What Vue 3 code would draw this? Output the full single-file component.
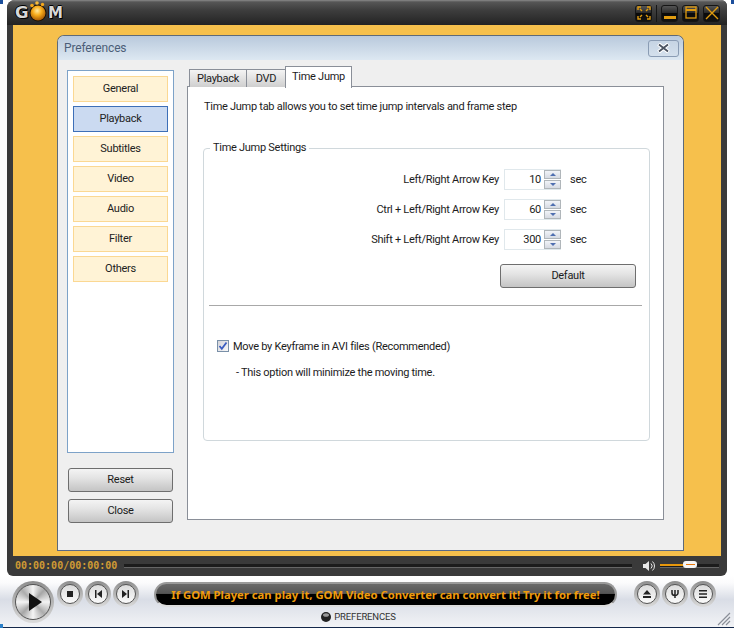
<script setup>
const navItems = ['General', 'Playback', 'Subtitles', 'Video', 'Audio', 'Filter', 'Others']
const rows = [
  { label: 'Left/Right Arrow Key', value: 10 },
  { label: 'Ctrl + Left/Right Arrow Key', value: 60 },
  { label: 'Shift + Left/Right Arrow Key', value: 300 }
]
</script>

<template>
  <div class="player">
    <div class="frame">
      <header class="titlebar">
        <div class="logo">
          <span class="lg">G</span>
          <svg width="20" height="21" viewBox="0 0 20 21">
            <defs>
              <radialGradient id="orb" cx="45%" cy="35%" r="65%">
                <stop offset="0" stop-color="#ffe9a0" />
                <stop offset="0.45" stop-color="#f8ad1c" />
                <stop offset="1" stop-color="#a85a04" />
              </radialGradient>
            </defs>
            <circle cx="10" cy="12" r="8.500" fill="#1a1005" />
            <circle cx="10" cy="12" r="7.500" fill="url(#orb)" />
            <circle cx="4" cy="4.500" r="1.800" fill="#f5a81c" />
            <circle cx="9" cy="2" r="1.800" fill="#f8bb3a" />
            <circle cx="14.500" cy="3.500" r="1.700" fill="#f5a81c" />
          </svg>
          <span class="lm">M</span>
        </div>
        <div class="winbtns">
          <button class="winbtn">
            <svg width="14" height="14" viewBox="0 0 14 14" fill="none" stroke="#dd9a10" stroke-width="1.400">
              <path d="M1 4V1h3M10 1h3v3M1 10v3h3M10 13h3v-3M3 3l2 2M11 3L9 5M3 11l2-2M11 11L9 9" />
            </svg>
          </button>
          <span class="winsep"></span>
          <button class="winbtn">
            <svg width="14" height="14" viewBox="0 0 14 14"><rect x="1" y="10" width="12" height="3" fill="#e09c10" /></svg>
          </button>
          <button class="winbtn">
            <svg width="14" height="14" viewBox="0 0 14 14" fill="none" stroke="#e09c10" stroke-width="1.300">
              <rect x="2" y="1" width="10" height="11" /><path d="M2 4h10" stroke-width="2" />
            </svg>
          </button>
          <button class="winbtn">
            <svg width="14" height="14" viewBox="0 0 14 14" fill="none" stroke="#e09c10" stroke-width="1.400"><path d="M1 1l12 12M13 1L1 13" /></svg>
          </button>
        </div>
      </header>

      <main class="stage">
        <section class="dialog">
          <div class="dlg-title">
            <span>Preferences</span>
            <button class="dlg-close">
              <svg width="13" height="10" viewBox="0 0 13 10">
                <path d="M1.500 1l10 8M11.500 1l-10 8" fill="none" stroke="#fff" stroke-width="4" />
                <path d="M2 1.500l9 7M11 1.500l-9 7" fill="none" stroke="#4a5260" stroke-width="1.800" />
              </svg>
            </button>
          </div>
          <div class="dlg-body">
            <aside class="side">
              <nav class="side-list">
                <div v-for="n in navItems" :key="n" class="nav-item" :class="{ active: n === 'Playback' }">{{ n }}</div>
              </nav>
              <button class="btn side-btn first">Reset</button>
              <button class="btn side-btn">Close</button>
            </aside>
            <div class="tabs-wrap">
              <div class="tabs">
                <div class="tab">Playback</div>
                <div class="tab dvd">DVD</div>
                <div class="tab on">Time Jump</div>
              </div>
              <div class="panel">
                <p class="desc">Time Jump tab allows you to set time jump intervals and frame step</p>
                <div class="group">
                  <span class="legend">Time Jump Settings</span>
                  <div class="fields">
                    <div v-for="r in rows" :key="r.label" class="field">
                      <span class="f-label">{{ r.label }}</span>
                      <div class="spin">
                        <span class="spin-val">{{ r.value }}</span>
                        <span class="spin-arrows">
                          <i class="up"></i>
                          <i class="down"></i>
                        </span>
                      </div>
                      <span class="unit">sec</span>
                    </div>
                  </div>
                  <button class="btn default">Default</button>
                  <div class="divider"></div>
                  <label class="check">
                    <span class="box">
                      <svg width="10" height="10" viewBox="0 0 10 10"><path d="M1.500 5l2.300 2.800L8.500 1.500" fill="none" stroke="#3a5cc0" stroke-width="1.800" /></svg>
                    </span>
                    Move by Keyframe in AVI files (Recommended)
                  </label>
                  <p class="hint">- This option will minimize the moving time.</p>
                </div>
              </div>
            </div>
          </div>
        </section>
      </main>

      <div class="timebar">
        <span class="clock">00:00:00/00:00:00</span>
        <div class="seek"></div>
        <svg class="vol-ic" width="12" height="12" viewBox="0 0 12 12">
          <path d="M0 4h2.500L6 1v10L2.500 8H0z" fill="#e8e8e8" />
          <path d="M8 3.500a3.500 3.500 0 0 1 0 5M9.500 1.500a6 6 0 0 1 0 9" fill="none" stroke="#e8e8e8" stroke-width="1" />
        </svg>
        <div class="vol">
          <div class="vol-fill"></div>
          <div class="vol-thumb"><i></i></div>
        </div>
      </div>
    </div>

    <footer class="controls">
      <div class="round big">
        <div class="disc">
          <svg width="14" height="18" viewBox="0 0 14 18"><path d="M1 0l13 9L1 18z" fill="#111" /></svg>
        </div>
      </div>
      <div class="round">
        <div class="disc"><svg width="8" height="8" viewBox="0 0 8 8"><rect x="1" y="1" width="6" height="6" fill="#222" /></svg></div>
      </div>
      <div class="round">
        <div class="disc"><svg width="8" height="8" viewBox="0 0 8 8"><path d="M1 0h1.500v8H1zM8 0v8L3 4z" fill="#222" /></svg></div>
      </div>
      <div class="round">
        <div class="disc"><svg width="8" height="8" viewBox="0 0 8 8"><path d="M0 0v8l5-4zM5.500 0H7v8H5.500z" fill="#222" /></svg></div>
      </div>
      <div class="center">
        <div class="marquee"><span>If GOM Player can play it, GOM Video Converter can convert it! Try it for free!</span></div>
        <div class="caption">
          <svg width="10" height="10" viewBox="0 0 10 10"><circle cx="5" cy="5" r="5" fill="#222" /><ellipse cx="5" cy="3" rx="3" ry="1.800" fill="#999" /></svg>
          <span>PREFERENCES</span>
        </div>
      </div>
      <div class="round">
        <div class="disc"><svg width="10" height="8" viewBox="0 0 10 8"><path d="M5 0l4 4.500H1zM1 6h8v2H1z" fill="#222" /></svg></div>
      </div>
      <div class="round">
        <div class="disc"><svg width="8" height="8" viewBox="0 0 8 8"><path d="M1 0v3a3 2.500 0 0 0 6 0V0M4 0v8" fill="none" stroke="#222" stroke-width="1.500" /></svg></div>
      </div>
      <div class="round">
        <div class="disc"><svg width="8" height="8" viewBox="0 0 8 8"><path d="M0 0h8v1.600H0zM0 3.200h8v1.600H0zM0 6.400h8V8H0z" fill="#222" /></svg></div>
      </div>
      <svg class="grip" width="14" height="14" viewBox="0 0 14 14">
        <path d="M13 1L1 13M13 5L5 13M13 9l-4 4" stroke="#8a8f98" stroke-width="1.200" fill="none" />
      </svg>
    </footer>
  </div>
</template>

<style scoped>
.player {
  position: relative;
  width: 734px;
  height: 628px;
  overflow: hidden;
  background: #fff;
  font-family: Roboto, "Liberation Sans", Arial, sans-serif;
  font-size: 11px;
  letter-spacing: -0.28px;
  color: #1c1c1c;
}
.player::before,
.player::after {
  content: "";
  position: absolute;
  top: 0;
  width: 3px;
  height: 4px;
  background: #1c4f9c;
}
.player::before { left: 0; }
.player::after { right: 0; }
.frame {
  width: 720px;
  height: 576px;
  margin-left: 7px;
  background: #3a3a3a;
  border-radius: 8px 6px 6px 6px;
}
.titlebar {
  height: 25px;
  display: flex;
  align-items: center;
  justify-content: space-between;
  padding: 1px 7px 0 8px;
  box-sizing: border-box;
  background: linear-gradient(#8a8a8a 0, #565656 2px, #3e3e3e 10px, #232323 25px);
  border-radius: 8px 6px 0 0;
}
.logo {
  display: flex;
  align-items: center;
  font: 900 15px/16px "DejaVu Sans", sans-serif;
  letter-spacing: 0;
  color: #d8d8d8;
  text-shadow: 1px 1px 0 #000, -1px 0 0 #000, 0 -1px 0 #000;
}
.lg, .lm { display: block; transform-origin: left center; }
.lg { width: 13px; transform: scaleX(1.100); }
.lm { width: 15px; }
.logo svg { margin-top: -3px; }
.winbtns { display: flex; align-items: center; gap: 4px; }
.winbtn {
  width: 17px;
  height: 17px;
  padding: 0;
  display: flex;
  align-items: center;
  justify-content: center;
  background: linear-gradient(#555 0, #2a2a2a 45%, #0a0a0a 50%, #121212 100%);
  border: 1px solid #151515;
  border-radius: 3px;
}
.winsep { width: 1px; height: 17px; background: #161616; }
.stage {
  width: 708px;
  height: 531px;
  margin-left: 6px;
  padding: 10px 37px 5px 44px;
  box-sizing: border-box;
  background: #f6c04c;
}
.dialog {
  width: 627px;
  height: 516px;
  box-sizing: border-box;
  background: #efefef;
  border: 1px solid #5e6a78;
  border-bottom-color: #5a6a88;
  border-radius: 7px 7px 0 0;
}
.dlg-title {
  height: 24px;
  display: flex;
  align-items: center;
  justify-content: space-between;
  padding: 0 4px 0 6px;
  background: linear-gradient(#b9c9dc, #dde8f2);
  color: #4c5e78;
  font-size: 12px;
  letter-spacing: -0.15px;
  border-radius: 6px 6px 0 0;
}
.dlg-close {
  width: 31px;
  height: 17px;
  padding: 0;
  display: flex;
  align-items: center;
  justify-content: center;
  background: linear-gradient(#c6d4e4, #d4e0ec);
  border: 1px solid #8a9cb4;
  border-radius: 3px;
}
.dlg-body { display: flex; padding-left: 9px; }
.side { width: 107px; margin-top: 10px; }
.side-list {
  height: 383px;
  box-sizing: border-box;
  background: #fff;
  border: 1px solid #7da2c8;
  padding: 5px;
  display: flex;
  flex-direction: column;
  gap: 4px;
}
.nav-item {
  height: 26px;
  box-sizing: border-box;
  display: flex;
  align-items: center;
  justify-content: center;
  padding-bottom: 2px;
  background: #fff3d6;
  border: 1px solid #fbd893;
  color: #222;
}
.nav-item.active { background: #cbdaf1; border-color: #3d6fb8; }
.btn {
  display: block;
  padding: 0 0 2px;
  font: 11px Roboto, "Liberation Sans", Arial, sans-serif;
  letter-spacing: -0.28px;
  color: #1c1c1c;
  background: linear-gradient(#f4f4f4 0, #e4e4e4 40%, #c4c4c4 100%);
  border: 1px solid #6e6e6e;
  border-radius: 3px;
}
.side-btn { width: 105px; height: 24px; margin: 7px 0 0 1px; }
.side-btn.first { margin-top: 15px; }
.tabs-wrap { width: 477px; margin-left: 13px; margin-top: 6px; }
.tabs {
  height: 21px;
  display: flex;
  align-items: flex-end;
  padding-left: 2px;
}
.tab {
  position: relative;
  width: 58px;
  height: 18px;
  box-sizing: border-box;
  display: flex;
  align-items: center;
  justify-content: center;
  background: linear-gradient(#f4f4f4, #cfcfcf);
  border: 1px solid #8a8f98;
  border-bottom: 0;
  margin-right: -1px;
}
.tab.dvd { width: 40px; }
.tab.on {
  width: 67px;
  height: 22px;
  margin-bottom: -1px;
  background: #fff;
  z-index: 1;
  padding-bottom: 2px;
}
.panel {
  height: 434px;
  box-sizing: border-box;
  margin-top: -1px;
  background: #fff;
  border: 1px solid #8a8f98;
  padding: 13px 0 0 15px;
}
.desc { margin: 0 0 0 1px; line-height: 14px; }
.group {
  position: relative;
  width: 447px;
  height: 293px;
  box-sizing: border-box;
  margin-top: 34px;
  border: 1px solid #d0d8dc;
  border-radius: 4px;
  padding-top: 20px;
}
.legend {
  position: absolute;
  left: 6px;
  top: -8px;
  padding: 0 3px;
  background: #fff;
  line-height: 14px;
}
.fields { display: flex; flex-direction: column; gap: 9px; }
.field {
  display: grid;
  grid-template-columns: 295px 57px auto;
  column-gap: 5px;
  align-items: center;
  height: 21px;
}
.f-label { text-align: right; }
.unit { margin-left: 4px; }
.spin {
  height: 21px;
  box-sizing: border-box;
  display: flex;
  border: 1px solid #e0e8ec;
  border-right: 0;
}
.spin-val { flex: 1; text-align: right; line-height: 19px; padding-right: 3px; }
.spin-arrows {
  width: 17px;
  display: flex;
  flex-direction: column;
  gap: 1px;
}
.spin-arrows i {
  flex: 1;
  display: flex;
  align-items: center;
  justify-content: center;
  background: linear-gradient(#f2f4f8, #d6dae2);
  border: 1px solid #b0b6ba;
}
.spin-arrows i::after {
  content: "";
  border-left: 3px solid transparent;
  border-right: 3px solid transparent;
}
.spin-arrows .up::after { border-bottom: 3px solid #4f6fb0; }
.spin-arrows .down::after { border-top: 3px solid #4f6fb0; }
.default { width: 136px; height: 24px; margin: 14px 0 0 296px; }
.divider { width: 433px; height: 1px; margin: 17px 0 0 5px; background: #a8a8a8; }
.check {
  display: flex;
  align-items: center;
  gap: 4px;
  margin: 33px 0 0 13px;
  height: 14px;
}
.box {
  width: 12px;
  height: 12px;
  box-sizing: border-box;
  display: flex;
  align-items: center;
  justify-content: center;
  background: linear-gradient(135deg, #d4d4da, #f8f8f8);
  border: 1px solid #7a90a8;
}
.hint { margin: 13px 0 0 32px; line-height: 14px; }
.timebar {
  height: 20px;
  display: flex;
  align-items: center;
  padding: 0 8px;
}
.clock {
  width: 109px;
  font: 700 10px/12px "DejaVu Sans Mono", monospace;
  letter-spacing: 0;
  color: #cf9a34;
}
.seek {
  width: 510px;
  height: 3px;
  background: #1c1c1c;
  border-bottom: 1px solid #666;
}
.vol-ic { margin-left: 11px; }
.vol {
  position: relative;
  width: 59px;
  height: 3px;
  margin-left: 5px;
  background: #1c1c1c;
  border-bottom: 1px solid #666;
}
.vol-fill { width: 23px; height: 2px; background: #e8980c; }
.vol-thumb {
  position: absolute;
  left: 23px;
  top: -3px;
  width: 14px;
  height: 7px;
  display: flex;
  align-items: center;
  justify-content: center;
  background: #f4f4f4;
  border-radius: 3px;
}
.vol-thumb i { width: 9px; height: 1px; background: #e8780c; }
.controls {
  position: relative;
  height: 52px;
  box-sizing: border-box;
  padding: 5px 0 0 12px;
  display: flex;
  align-items: flex-start;
  gap: 2px;
  background: linear-gradient(#fff 0, #fbfbfc 14%, #d9dde6 46%, #e4e7ed 70%, #f2f3f6 100%);
  border-bottom: 1px solid #14284a;
}
.controls::before {
  content: "";
  position: absolute;
  left: 0;
  bottom: -1px;
  width: 3px;
  height: 4px;
  background: #2a7fc8;
}
.round {
  width: 26px;
  height: 26px;
  box-sizing: border-box;
  padding: 3px;
  border-radius: 50%;
  background: linear-gradient(#8e8e8e, #dcdcdc);
  flex: none;
}
.disc {
  width: 100%;
  height: 100%;
  box-sizing: border-box;
  display: flex;
  align-items: center;
  justify-content: center;
  border-radius: 50%;
  border: 1px solid #555;
  background: linear-gradient(#dcdcdc, #fafafa);
}
.round.big { width: 42px; height: 42px; margin-right: 1px; }
.round.big .disc {
  background: conic-gradient(#f4f4f4, #a6a6a6 12%, #f4f4f4 25%, #acacac 38%, #f4f4f4 50%, #a6a6a6 62%, #f4f4f4 75%, #acacac 88%, #f4f4f4);
  padding-left: 3px;
}
.center { width: 463px; margin: 1px 15px 0 13px; flex: none; }
.marquee {
  height: 25px;
  box-sizing: border-box;
  display: flex;
  align-items: center;
  justify-content: center;
  background: linear-gradient(#6a6a6a 0, #555 45%, #000 50%, #000 100%);
  border: 2px solid #9a9a9a;
  border-bottom-color: #ddd;
  border-radius: 13px;
  color: #f09c0c;
  font: 700 11.250px "Noto Sans", sans-serif;
  letter-spacing: 0;
  white-space: nowrap;
}
.caption {
  display: flex;
  align-items: center;
  justify-content: center;
  gap: 3px;
  margin-top: 4px;
  color: #333;
  font-size: 9.500px;
  letter-spacing: -0.15px;
  line-height: 12px;
  padding-right: 54px;
}
.grip { position: absolute; right: 3px; bottom: 1px; }
</style>
